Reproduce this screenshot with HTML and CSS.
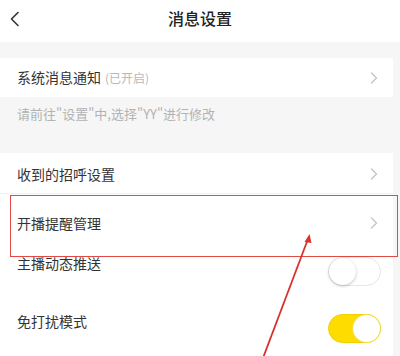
FILE: index.html
```html
<!DOCTYPE html>
<html lang="zh">
<head>
<meta charset="utf-8">
<link rel="stylesheet" href="styles.css">
</head>
<body>
<div class="page">
  <header class="header">
    <svg class="back" width="12" height="16" viewBox="0 0 12 16"><path d="M9 1.5 L2.5 8 L9 14.5" fill="none" stroke="#333" stroke-width="1.6" stroke-linecap="round" stroke-linejoin="round"/></svg>
    <h1 class="title">消息设置</h1>
  </header>
  <div class="gap"></div>
  <div class="row row-sys">
    <span class="label">系统消息通知<span class="status">(已开启)</span></span>
    <svg class="chev" width="8" height="12" viewBox="0 0 8 12"><path d="M1.5 1 L6.5 6 L1.5 11" fill="none" stroke="#c4c4c4" stroke-width="1.3" stroke-linecap="round" stroke-linejoin="round"/></svg>
  </div>
  <div class="hint">请前往"设置"中,选择"YY"进行修改</div>
  <div class="row row-greet">
    <span class="label">收到的招呼设置</span>
    <svg class="chev" width="8" height="12" viewBox="0 0 8 12"><path d="M1.5 1 L6.5 6 L1.5 11" fill="none" stroke="#c4c4c4" stroke-width="1.3" stroke-linecap="round" stroke-linejoin="round"/></svg>
  </div>
  <div class="row row-live">
    <span class="label">开播提醒管理</span>
    <svg class="chev" width="8" height="12" viewBox="0 0 8 12"><path d="M1.5 1 L6.5 6 L1.5 11" fill="none" stroke="#c4c4c4" stroke-width="1.3" stroke-linecap="round" stroke-linejoin="round"/></svg>
  </div>
  <div class="row row-push">
    <span class="label">主播动态推送</span>
    <span class="toggle"><span class="knob"></span></span>
  </div>
  <div class="row row-dnd">
    <span class="label">免打扰模式</span>
    <span class="toggle on"><span class="knob"></span></span>
  </div>

  <div class="highlight"></div>
  <svg class="arrow" width="400" height="356" viewBox="0 0 400 356">
    <line x1="263" y1="358" x2="308" y2="239" stroke="#d9322f" stroke-width="1.8"/>
    <path d="M309.5 234 L304.5 242 L311.5 243 Z" fill="#d9322f"/>
  </svg>
</div>
</body>
</html>
```

FILE: styles.css
```css
* { box-sizing: border-box; margin: 0; padding: 0; }
html, body { width: 400px; height: 356px; overflow: hidden; }
body {
  background: #f6f6f6;
  font-family: "Noto Sans CJK SC", "Noto Sans", sans-serif;
  color: #333;
}
.page { position: relative; width: 400px; height: 356px; }

.header {
  position: relative;
  height: 42px;
  background: #fff;
  display: flex;
  align-items: center;
  justify-content: center;
}
.back { position: absolute; left: 9px; top: 11px; }
.title {
  font-size: 16px;
  font-weight: 500;
  color: #222;
  line-height: 20px;
  margin-top: -6px;
}

.gap { height: 16px; }

.row {
  background: #fff;
  margin-right: 7px;
  display: flex;
  align-items: center;
  justify-content: space-between;
  padding: 0 15px 0 17px;
}
.label { font-size: 14px; line-height: 20px; color: #333; }
.status { font-size: 12px; color: #b8b8b8; margin-left: 4px; }
.chev { display: block; }

.row-sys { height: 39px; }
.hint {
  height: 56px;
  padding: 7px 0 0 17px;
  font-size: 13px;
  line-height: 20px;
  color: #b3b3b3;
}
.row-greet { height: 41px; border-bottom: 1px solid #f0f0f0; padding-top: 2px; }
.row-live { height: 57px; padding-top: 1px; }
.row-push { height: 57px; align-items: flex-start; padding-right: 12px; }
.row-push .label { margin-top: 2px; }
.row-push .toggle { margin-top: 6px; }
.row-dnd { height: 58px; align-items: flex-start; padding-right: 12px; }
.row-dnd .label { margin-top: 3px; }
.row-dnd .toggle { margin-top: 6px; }

.toggle {
  position: relative;
  width: 53px;
  height: 29px;
  border-radius: 15px;
  background: #fff;
  border: 1px solid #e6e6e6;
  display: block;
}
.toggle .knob {
  position: absolute;
  left: 0;
  top: 0;
  width: 27px;
  height: 27px;
  border-radius: 50%;
  background: #fff;
  box-shadow: 0 1px 3px rgba(0,0,0,0.25);
}
.toggle.on { background: #ffdc00; border-color: #f0d000; }
.toggle.on .knob {
  left: auto;
  right: 0;
  box-shadow: 0 0 0 1px #f2dc40;
}

.highlight {
  position: absolute;
  left: 10px;
  top: 195px;
  width: 388px;
  height: 62px;
  border: 1.5px solid #e04a45;
}
.arrow { position: absolute; left: 0; top: 0; pointer-events: none; }
```
